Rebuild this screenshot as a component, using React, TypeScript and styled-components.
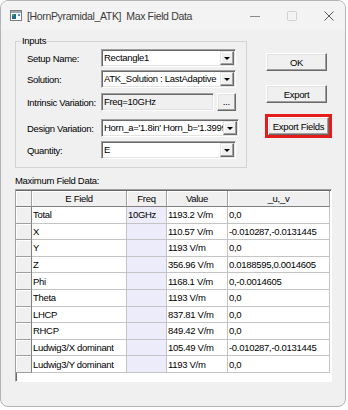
import { Fragment } from "react";
import styled, { createGlobalStyle } from "styled-components";

const GlobalStyle = createGlobalStyle`
  html, body {
    margin: 0;
    padding: 0;
    background: #fff;
  }
  body {
    font-family: "Liberation Sans", Arial, sans-serif;
    font-size: 9.5px;
    letter-spacing: -0.3px;
    color: #000;
  }
`;

const Window = styled.div`
  box-sizing: border-box;
  width: 346px;
  height: 407px;
  border: 1px solid #b4b4b4;
  border-radius: 8px;
  background: #f0f0f0;
  overflow: hidden;
  display: flex;
  flex-direction: column;
`;

const TitleBar = styled.div`
  height: 29px;
  flex: none;
  display: flex;
  align-items: center;
  padding-left: 9px;
  background: #f3f3f3;
`;

const TitleText = styled.div`
  margin-left: 5px;
  flex: 1;
  font-size: 10.5px;
  letter-spacing: -0.35px;
  color: #3c3c3c;
  white-space: nowrap;
`;

const CaptionGroup = styled.div`
  display: flex;
  height: 100%;
  margin-right: -2px;
`;

const CaptionButton = styled.div`
  width: 37px;
  height: 100%;
  display: flex;
  align-items: center;
  justify-content: center;
`;

const Body = styled.div`
  flex: 1;
  padding: 0 13px 0 14px;
`;

const TopSection = styled.div`
  display: flex;
  align-items: flex-start;
`;

const GroupBox = styled.fieldset`
  box-sizing: border-box;
  margin: 5px 0 0 0;
  width: 237px;
  min-width: 0;
  padding: 2px 10px 8px 5px;
  border: 1px solid #d3d3d3;
`;

const GroupLegend = styled.legend`
  padding: 0 1px;
  line-height: 12px;
`;

const FieldRow = styled.div<{ $gap: number }>`
  display: flex;
  align-items: center;
  margin: ${(p) => p.$gap}px 0 0 6px;
  height: 18px;
`;

const FieldLabel = styled.div`
  width: 74px;
  flex: none;
  white-space: nowrap;
`;

const Sunken = styled.div<{ $width: number; $readOnly?: boolean }>`
  box-sizing: border-box;
  width: ${(p) => p.$width}px;
  height: 18px;
  border: 1px solid;
  border-color: #a0a0a0 #fff #fff #a0a0a0;
  box-shadow: inset 1px 1px 0 #696969, inset -1px -1px 0 #e3e3e3;
  background: ${(p) => (p.$readOnly ? "#f0f0f0" : "#fff")};
  display: flex;
  align-items: center;
  padding: 1px 1px 1px 2px;
`;

const ComboText = styled.div`
  flex: 1;
  min-width: 0;
  overflow: hidden;
  white-space: nowrap;
  line-height: 14px;
`;

const DropButton = styled.div`
  box-sizing: border-box;
  width: 14px;
  height: 14px;
  flex: none;
  background: #f0f0f0;
  border: 1px solid;
  border-color: #e3e3e3 #696969 #696969 #e3e3e3;
  box-shadow: inset -1px -1px 0 #a0a0a0, inset 1px 1px 0 #fff;
  display: flex;
  align-items: center;
  justify-content: center;
`;

const Arrow = styled.div`
  width: 0;
  height: 0;
  border-left: 3px solid transparent;
  border-right: 3px solid transparent;
  border-top: 3px solid #000;
  margin-top: 1px;
`;

const RaisedButton = styled.div<{ $width: number }>`
  box-sizing: border-box;
  width: ${(p) => p.$width}px;
  height: 18px;
  background: #f0f0f0;
  border: 1px solid;
  border-color: #fff #696969 #696969 #fff;
  box-shadow: inset -1px -1px 0 #a0a0a0, inset 1px 1px 0 #e3e3e3;
  display: flex;
  align-items: center;
  justify-content: center;
  white-space: nowrap;
`;

const EllipsisButton = styled(RaisedButton)`
  margin-left: 3px;
  padding-bottom: 2px;
`;

const ButtonColumn = styled.div`
  margin: 23px 0 0 19px;
  display: flex;
  flex-direction: column;
  align-items: flex-start;
`;

const ButtonSlot = styled.div<{ $gap: number }>`
  margin-top: ${(p) => p.$gap}px;
`;

const Highlight = styled.div`
  margin: 11px 0 0 -1px;
  border: 3px solid #e41c1c;
`;

const SectionLabel = styled.div`
  margin-top: 7px;
  line-height: 12px;
`;

const Grid = styled.div`
  box-sizing: border-box;
  margin-top: 2px;
  width: 317px;
  height: 193px;
  background: #fff;
  border: 1px solid;
  border-color: #a0a0a0 #fff #fff #a0a0a0;
  box-shadow: inset 1px 1px 0 #696969;
  padding: 1px 0 0 0;
  display: grid;
  grid-template-columns: 16px 95px 40px 61px 102px;
  grid-template-rows: 16px repeat(10, 16.6px);
  align-content: start;
`;

const HeaderCell = styled.div`
  box-sizing: border-box;
  background: #f0f0f0;
  border-right: 1px solid #a0a0a0;
  border-bottom: 1px solid #808080;
  box-shadow: inset 1px 1px 0 #fff;
  display: flex;
  align-items: center;
  justify-content: center;
  white-space: nowrap;
`;

const RowSelector = styled.div`
  box-sizing: border-box;
  background: #f0f0f0;
  border-right: 1px solid #808080;
  border-bottom: 1px solid #a0a0a0;
  box-shadow: inset 1px 1px 0 #fff;
`;

const DataCell = styled.div<{ $tint?: boolean }>`
  box-sizing: border-box;
  background: ${(p) => (p.$tint ? "#ececfb" : "#fff")};
  border-right: 1px solid #c4c4c4;
  border-bottom: 1px solid #c4c4c4;
  padding-left: 1px;
  display: flex;
  align-items: center;
  white-space: nowrap;
  overflow: hidden;
`;

const AppIcon = () => (
  <svg width="12" height="11" viewBox="0 0 12 11">
    <rect x="0.5" y="0.5" width="11" height="10" fill="#fff" stroke="#7d7d7d" />
    <rect x="1" y="1" width="10" height="2" fill="#9aa7b5" />
    <rect x="2" y="4" width="4" height="5" fill="#1f6f8b" />
    <rect x="2" y="4" width="2" height="2" fill="#3ca55c" />
    <rect x="8" y="4" width="2" height="2" fill="#4a8fd6" />
  </svg>
);

const inputs = [
  { label: "Setup Name:", value: "Rectangle1", gap: 0 },
  { label: "Solution:", value: "ATK_Solution : LastAdaptive", gap: 3 },
];

const inputsBelow = [
  { label: "Design Variation:", value: "Horn_a='1.8in' Horn_b='1.3999", gap: 8 },
  { label: "Quantity:", value: "E", gap: 4 },
];

const columns = ["E Field", "Freq", "Value", "_u,_v"];

const rows = [
  ["Total", "10GHz", "1193.2 V/m", "0,0"],
  ["X", "", "110.57 V/m", "-0.010287,-0.0131445"],
  ["Y", "", "1193 V/m", "0,0"],
  ["Z", "", "356.96 V/m", "0.0188595,0.0014605"],
  ["Phi", "", "1168.1 V/m", "0,-0.0014605"],
  ["Theta", "", "1193 V/m", "0,0"],
  ["LHCP", "", "837.81 V/m", "0,0"],
  ["RHCP", "", "849.42 V/m", "0,0"],
  ["Ludwig3/X dominant", "", "105.49 V/m", "-0.010287,-0.0131445"],
  ["Ludwig3/Y dominant", "", "1193 V/m", "0,0"],
];

const Combo = ({ value }: { value: string }) => (
  <Sunken $width={138}>
    <ComboText>{value}</ComboText>
    <DropButton>
      <Arrow />
    </DropButton>
  </Sunken>
);

const App = () => (
  <>
    <GlobalStyle />
    <Window>
      <TitleBar>
        <AppIcon />
        <TitleText>[HornPyramidal_ATK]&nbsp; Max Field Data</TitleText>
        <CaptionGroup>
          <CaptionButton>
            <svg width="10" height="10" viewBox="0 0 10 10">
              <line x1="0" y1="5.5" x2="10" y2="5.5" stroke="#8a8a8a" />
            </svg>
          </CaptionButton>
          <CaptionButton>
            <svg width="10" height="10" viewBox="0 0 10 10">
              <rect x="0.5" y="0.5" width="9" height="9" rx="1" fill="none" stroke="#cfcfcf" />
            </svg>
          </CaptionButton>
          <CaptionButton>
            <svg width="10" height="10" viewBox="0 0 10 10">
              <path d="M0.5 0.5 L9.5 9.5 M9.5 0.5 L0.5 9.5" stroke="#5a5a5a" />
            </svg>
          </CaptionButton>
        </CaptionGroup>
      </TitleBar>
      <Body>
        <TopSection>
          <GroupBox>
            <GroupLegend>Inputs</GroupLegend>
            {inputs.map((f) => (
              <FieldRow key={f.label} $gap={f.gap}>
                <FieldLabel>{f.label}</FieldLabel>
                <Combo value={f.value} />
              </FieldRow>
            ))}
            <FieldRow $gap={5}>
              <FieldLabel>Intrinsic Variation:</FieldLabel>
              <Sunken $width={116} $readOnly>
                <ComboText>Freq=10GHz</ComboText>
              </Sunken>
              <EllipsisButton $width={20}>...</EllipsisButton>
            </FieldRow>
            {inputsBelow.map((f) => (
              <FieldRow key={f.label} $gap={f.gap}>
                <FieldLabel>{f.label}</FieldLabel>
                <Combo value={f.value} />
              </FieldRow>
            ))}
          </GroupBox>
          <ButtonColumn>
            <RaisedButton $width={61}>OK</RaisedButton>
            <ButtonSlot $gap={14}>
              <RaisedButton $width={61}>Export</RaisedButton>
            </ButtonSlot>
            <Highlight>
              <RaisedButton $width={61}>Export Fields</RaisedButton>
            </Highlight>
          </ButtonColumn>
        </TopSection>
        <SectionLabel>Maximum Field Data:</SectionLabel>
        <Grid>
          <HeaderCell />
          {columns.map((c) => (
            <HeaderCell key={c}>{c}</HeaderCell>
          ))}
          {rows.map((r) => (
            <Fragment key={r[0]}>
              <RowSelector />
              <DataCell>{r[0]}</DataCell>
              <DataCell $tint>{r[1]}</DataCell>
              <DataCell>{r[2]}</DataCell>
              <DataCell>{r[3]}</DataCell>
            </Fragment>
          ))}
        </Grid>
      </Body>
    </Window>
  </>
);

export default App;
